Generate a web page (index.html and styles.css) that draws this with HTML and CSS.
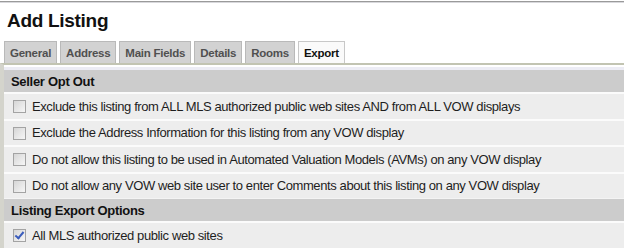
FILE: index.html
```html
<!DOCTYPE html>
<html>
<head>
<meta charset="utf-8">
<link rel="stylesheet" href="styles.css">
</head>
<body>
<div class="topline"></div>
<h1 class="title">Add Listing</h1>
<div class="tabs">
  <span class="tab">General</span>
  <span class="tab">Address</span>
  <span class="tab">Main Fields</span>
  <span class="tab">Details</span>
  <span class="tab">Rooms</span>
  <span class="tab active">Export</span>
</div>
<div class="panel">
  <div class="panel-gap"></div>
  <div class="section-head">Seller Opt Out</div>
  <label class="row"><input type="checkbox" class="cb"><span>Exclude this listing from ALL MLS authorized public web sites AND from ALL VOW displays</span></label>
  <label class="row"><input type="checkbox" class="cb"><span>Exclude the Address Information for this listing from any VOW display</span></label>
  <label class="row"><input type="checkbox" class="cb"><span>Do not allow this listing to be used in Automated Valuation Models (AVMs) on any VOW display</span></label>
  <label class="row"><input type="checkbox" class="cb"><span>Do not allow any VOW web site user to enter Comments about this listing on any VOW display</span></label>
  <div class="section-head section-head2">Listing Export Options</div>
  <label class="row"><input type="checkbox" class="cb" checked><span>All MLS authorized public web sites</span></label>
</div>
</body>
</html>
```
FILE: styles.css
```css
html, body {
  margin: 0;
  padding: 0;
  background: #ffffff;
  font-family: "Liberation Sans", Arial, sans-serif;
  color: #1a1a1a;
  overflow: hidden;
}
.topline {
  margin-top: 1px;
  height: 1px;
  background: #9a9a9a;
  border-bottom: 1px solid #d8d8dc;
}
.title {
  margin: 0;
  padding: 6px 0 0 7px;
  font-size: 19px;
  letter-spacing: -0.3px;
  line-height: 23px;
  font-weight: bold;
  color: #111;
  height: 32px;
}
.tabs {
  display: flex;
  gap: 3px;
  padding-left: 4px;
  height: 22px;
}
.tab {
  display: block;
  box-sizing: border-box;
  height: 22px;
  padding: 0 5px;
  border: 1px solid #b9b9b9;
  border-bottom: none;
  background: #d2d2d2;
  color: #505050;
  font-size: 11.5px;
  letter-spacing: -0.25px;
  font-weight: bold;
  line-height: 22px;
}
.tab.active {
  background: #fafafa;
  border-color: #c8c8c8;
  color: #111;
}
.panel {
  border-top: 2px solid #c2c4b2;
  border-left: 4px solid #d4d4cc;
  background: #ececec;
}
.panel-gap {
  height: 5px;
  background: linear-gradient(#ffffff 0 2px, #ececf4 2px);
}
.section-head {
  height: 22px;
  background: #cccccc;
  padding-left: 7px;
  font-size: 13px;
  letter-spacing: -0.3px;
  font-weight: bold;
  line-height: 23px;
  color: #111;
}
.section-head2 {
  border-top: 1px solid #f4f4f4;
}
.row {
  display: flex;
  align-items: center;
  height: 24.5px;
  border-top: 2px solid #fbfbfb;
  background: #ededed;
  font-size: 13px;
  letter-spacing: -0.4px;
  color: #1e1e1e;
}
.cb {
  appearance: none;
  -webkit-appearance: none;
  margin: 1px 6px 0 9px;
  width: 13px;
  height: 13px;
  box-sizing: border-box;
  border: 1px solid #a3a3a3;
  background: linear-gradient(135deg, #d6d6d6, #f6f6f6);
  position: relative;
  flex: none;
}
.cb:checked::after {
  content: "";
  position: absolute;
  left: 3px;
  top: 0px;
  width: 3px;
  height: 7px;
  border: solid #3a5cbc;
  border-width: 0 2px 2px 0;
  transform: rotate(40deg);
}
```
